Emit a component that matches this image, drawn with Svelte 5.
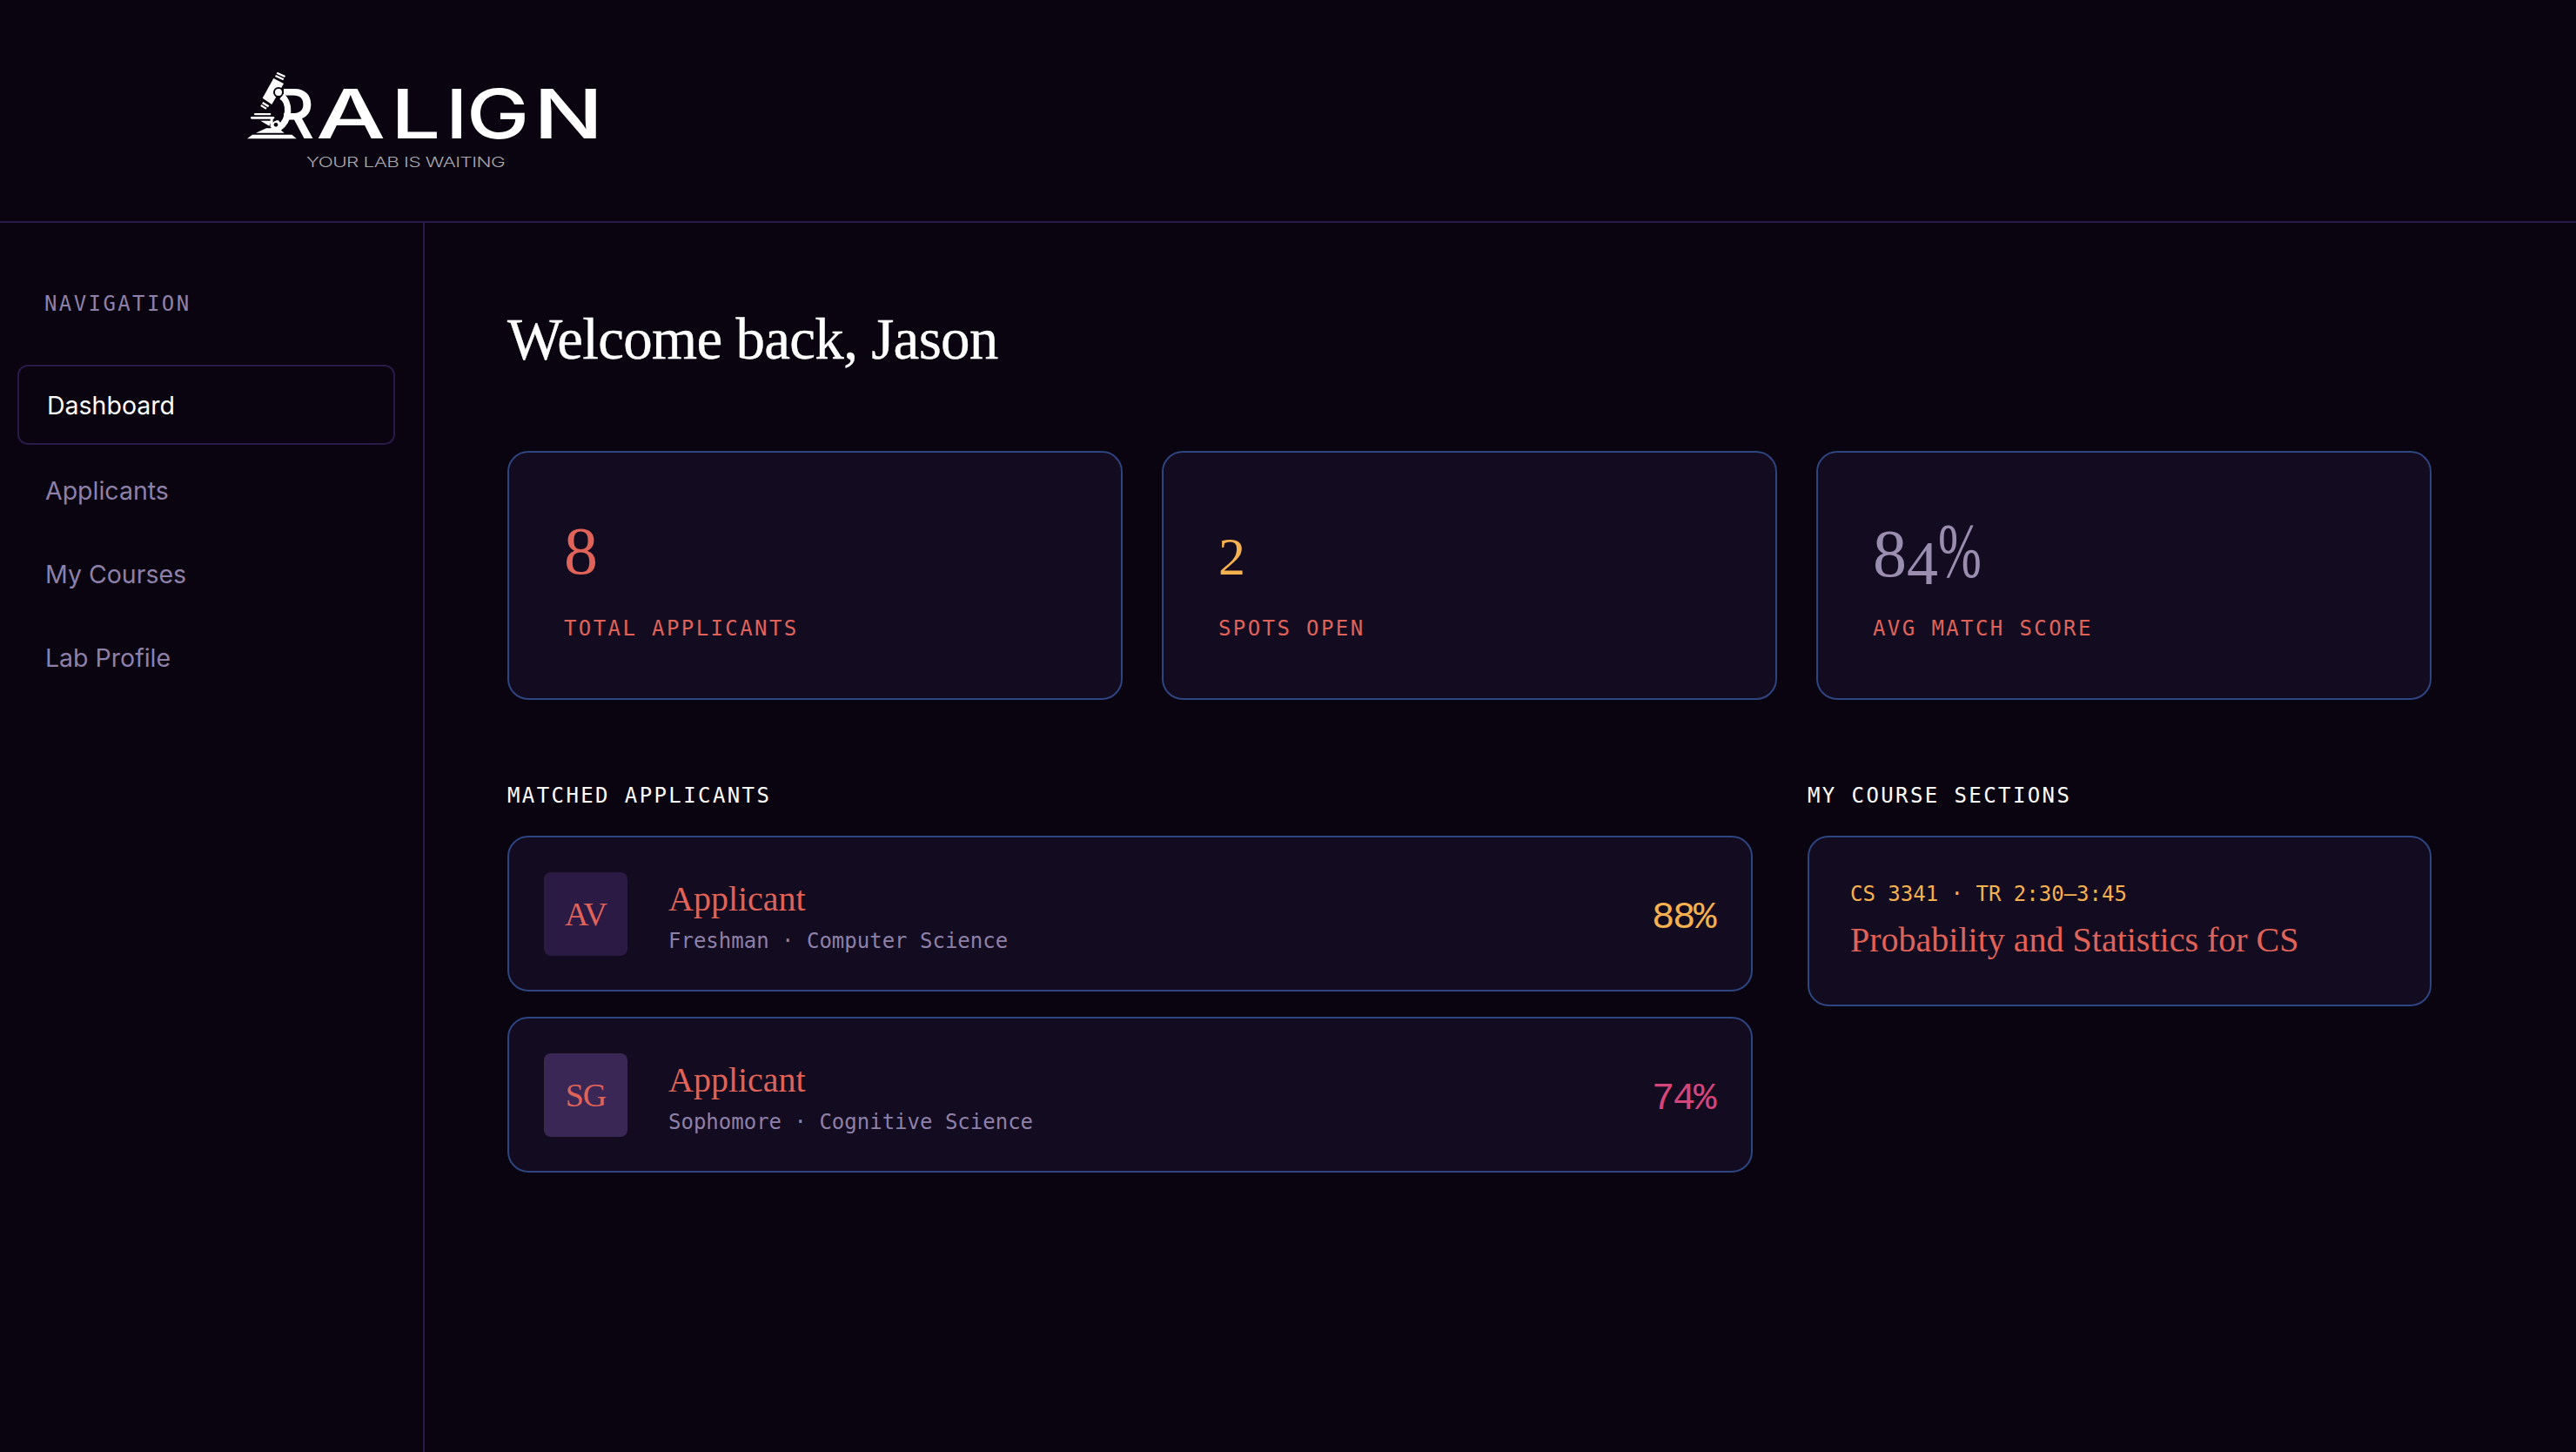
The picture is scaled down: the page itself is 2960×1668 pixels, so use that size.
<script>
  const stats = [
    { value: "8", label: "TOTAL APPLICANTS", tone: "coral" },
    { value: "2", label: "SPOTS OPEN", tone: "amber small" },
    { value: "84%", label: "AVG MATCH SCORE", tone: "muted" }
  ];

  const applicants = [
    { initials: "AV", info: "Freshman · Computer Science", score: "88%", tone: "amber", shade: "dim" },
    { initials: "SG", info: "Sophomore · Cognitive Science", score: "74%", tone: "pink", shade: "lit" }
  ];

  const nav = ["Dashboard", "Applicants", "My Courses", "Lab Profile"];
</script>

<div class="page">
  <header class="top">
    <div class="logo">
      <div class="word"><span class="r">R</span><span class="a">A</span><span class="l">L</span><span class="i">I</span><span class="g">G</span><span class="n">N</span></div>
      <svg class="scope" viewBox="0 0 390 300" aria-hidden="true">
        <rect x="100" y="60" width="68" height="215" fill="#090410" />
        <g fill="#fff">
          <path d="M133 60 L168 78 L127 150 L95 128 Z" />
          <path d="M146 38 L174 51 L171 57 L143 44 Z" />
          <path d="M141 48 L169 61 L166 67 L138 54 Z" />
          <path d="M97 141 L118 154 L114 160 L93 147 Z" />
          <path d="M91 150 L110 162 L106 167 L88 156 Z" />
          <rect x="66" y="180" width="58" height="7" rx="3" />
          <rect x="54" y="192" width="82" height="8" rx="4" />
          <path d="M88 206 L126 206 L118 224 Z" />
          <rect x="122" y="198" width="9" height="30" />
          <path d="M108 232 L150 232 L170 248 L72 248 Z" />
          <path d="M60 254 L196 254 L212 268 L42 268 Z" />
        </g>
        <path d="M160 122 C190 140 192 205 150 232" fill="none" stroke="#fff" stroke-width="22" />
        <path d="M124 232 C128 210 135 205 150 205 L165 225 L150 244 L124 244 Z" fill="#fff" />
        <circle cx="141" cy="220" r="7" fill="#090410" />
        <circle cx="150" cy="108" r="18" fill="#090410" />
        <circle cx="150" cy="108" r="12" fill="#fff" />
      </svg>
      <div class="tagline">YOUR LAB IS WAITING</div>
    </div>
  </header>

  <div class="body">
    <aside class="side">
      <div class="eyebrow muted-label">NAVIGATION</div>
      <nav>
        {#each nav as item, i}
          <div class="nav-item" class:active={i === 0}>{item}</div>
        {/each}
      </nav>
    </aside>

    <main>
      <h1>Welcome back, Jason</h1>

      <section class="stats">
        {#each stats as stat}
          <div class="card stat">
            <div class="value {stat.tone}">
              {#if stat.value === "84%"}8<span class="low">4</span><span class="pct">%</span>{:else}{stat.value}{/if}
            </div>
            <div class="eyebrow coral">{stat.label}</div>
          </div>
        {/each}
      </section>

      <section class="columns">
        <div>
          <h2 class="eyebrow">MATCHED APPLICANTS</h2>
          <div class="list">
            {#each applicants as person}
              <div class="card row">
                <div class="avatar {person.shade}">{person.initials}</div>
                <div class="who">
                  <div class="name">Applicant</div>
                  <div class="info">{person.info}</div>
                </div>
                <div class="score {person.tone}">{person.score}</div>
              </div>
            {/each}
          </div>
        </div>

        <div>
          <h2 class="eyebrow">MY COURSE SECTIONS</h2>
          <div class="card course">
            <div class="code">CS 3341 · TR 2:30–3:45</div>
            <div class="title">Probability and Statistics for CS</div>
          </div>
        </div>
      </section>
    </main>
  </div>
</div>

<style>
  :global(body) {
    background: #090410;
    color: #fff;
    font-family: Inter, sans-serif;
  }

  .page {
    min-height: 1668px;
    display: flex;
    flex-direction: column;
  }

  /* HEADER */
  .top {
    height: 256px;
    box-sizing: border-box;
    border-bottom: 2px solid #291a47;
    padding: 76px 0 0 284px;
  }

  .logo {
    position: relative;
    width: 410px;
    height: 120px;
  }

  .word {
    font-family: Inter, sans-serif;
    font-weight: 500;
    font-size: 78px;
    line-height: 60px;
    height: 60px;
    color: #fff;
    position: absolute;
    top: 25px;
    left: 0;
  }

  .word span {
    position: absolute;
    top: 0;
    transform-origin: left center;
  }

  .r { left: 27px; transform: scaleX(1); }
  .a { left: 79px; transform: scaleX(1.45); }
  .l { left: 165px; transform: scaleX(1.3); }
  .i { left: 228px; transform: scaleX(1.2); }
  .g { left: 252px; transform: scaleX(1.24); }
  .n { left: 329px; transform: scaleX(1.36); }

  .scope {
    position: absolute;
    left: -14px;
    top: -6px;
    width: 130px;
    height: 100px;
  }

  .tagline {
    position: absolute;
    left: 68px;
    top: 100px;
    font-size: 16.5px;
    font-weight: 300;
    color: #a9a9ad;
    white-space: nowrap;
    letter-spacing: -0.4px;
    transform: scaleX(1.36);
    transform-origin: left center;
  }

  /* LAYOUT */
  .body {
    flex: 1;
    display: flex;
  }

  .side {
    width: 488px;
    box-sizing: border-box;
    border-right: 2px solid #291a47;
    padding: 79px 32px 0 20px;
  }

  main {
    width: 2211px;
    padding: 0 0 0 95px;
  }

  .eyebrow {
    font-family: "DejaVu Sans Mono", monospace;
    font-size: 24px;
    letter-spacing: 2.4px;
    line-height: 28px;
    font-weight: 400;
    margin: 0;
  }

  .side .eyebrow {
    padding-left: 31px;
    margin-bottom: 56px;
  }

  .muted-label { color: #8e80a8; }

  .nav-item {
    height: 92px;
    box-sizing: border-box;
    display: flex;
    align-items: center;
    padding: 5px 0 0 30px;
    margin-bottom: 4px;
    font-size: 28.5px;
    color: #8e80a8;
    border: 2px solid transparent;
    border-radius: 12px;
  }

  .nav-item.active {
    color: #fff;
    border-color: #291a47;
    padding: 0 0 0 32px;
  }

  h1 {
    font-family: "Liberation Serif", serif;
    font-weight: 400;
    font-size: 67px;
    line-height: 80px;
    letter-spacing: -0.7px;
    -webkit-text-stroke: 0.4px #fff;
    margin: 93px 0 0;
    color: #fff;
  }

  .card {
    background: #130b20;
    border: 2px solid #2d4580;
    border-radius: 24px;
    box-sizing: border-box;
  }

  .stats {
    display: grid;
    grid-template-columns: repeat(3, 707px);
    gap: 45px;
    margin-top: 89px;
  }

  .stat {
    height: 286px;
    padding: 74px 63px 0;
  }

  .value {
    font-family: "Liberation Serif", serif;
    font-size: 78px;
    line-height: 78px;
    height: 78px;
    margin-bottom: 36px;
  }

  .value.small {
    font-size: 62px;
    line-height: 90px;
  }

  .low {
    position: relative;
    top: 9px;
    font-size: 72px;
  }

  .pct {
    display: inline-block;
    font-size: 88px;
    line-height: 78px;
    transform: scaleX(0.68);
    transform-origin: left center;
  }

  .coral { color: #e0635a; }
  .amber { color: #f5b04f; }
  .pink { color: #d6457a; }
  .muted { color: #9a8db0; }

  .columns {
    display: grid;
    grid-template-columns: 1431px 717px;
    gap: 63px;
    margin-top: 96px;
  }

  h2.eyebrow {
    color: #fff;
    margin-bottom: 32px;
  }

  .list {
    display: flex;
    flex-direction: column;
    gap: 29px;
  }

  .row {
    height: 179px;
    display: flex;
    align-items: center;
    padding: 0 40px;
  }

  .avatar {
    width: 96px;
    height: 96px;
    border-radius: 8px;
    display: flex;
    align-items: center;
    justify-content: center;
    flex-shrink: 0;
    font-family: "Liberation Serif", serif;
    font-size: 38px;
    letter-spacing: -1px;
    color: #e0635a;
    margin-right: 47px;
  }

  .avatar.dim { background: #2a1a44; }
  .avatar.lit { background: #3a2755; }

  .who {
    flex: 1;
    padding-top: 7px;
  }

  .name {
    font-family: "Liberation Serif", serif;
    font-size: 40px;
    line-height: 46px;
    color: #e0635a;
  }

  .info {
    font-family: "DejaVu Sans Mono", monospace;
    font-size: 24px;
    line-height: 30px;
    margin-top: 10px;
    color: #8e80a8;
  }

  .score {
    font-family: "Liberation Mono", monospace;
    font-size: 44px;
    letter-spacing: -2.4px;
    padding-top: 8px;
    margin-right: 2px;
  }

  .course {
    height: 196px;
    padding: 50px 47px 0;
  }

  .code {
    font-family: "DejaVu Sans Mono", monospace;
    font-size: 24px;
    line-height: 30px;
    color: #f5b04f;
  }

  .title {
    font-family: "Liberation Serif", serif;
    font-size: 40px;
    line-height: 50px;
    margin-top: 13px;
    color: #e0635a;
  }
</style>
